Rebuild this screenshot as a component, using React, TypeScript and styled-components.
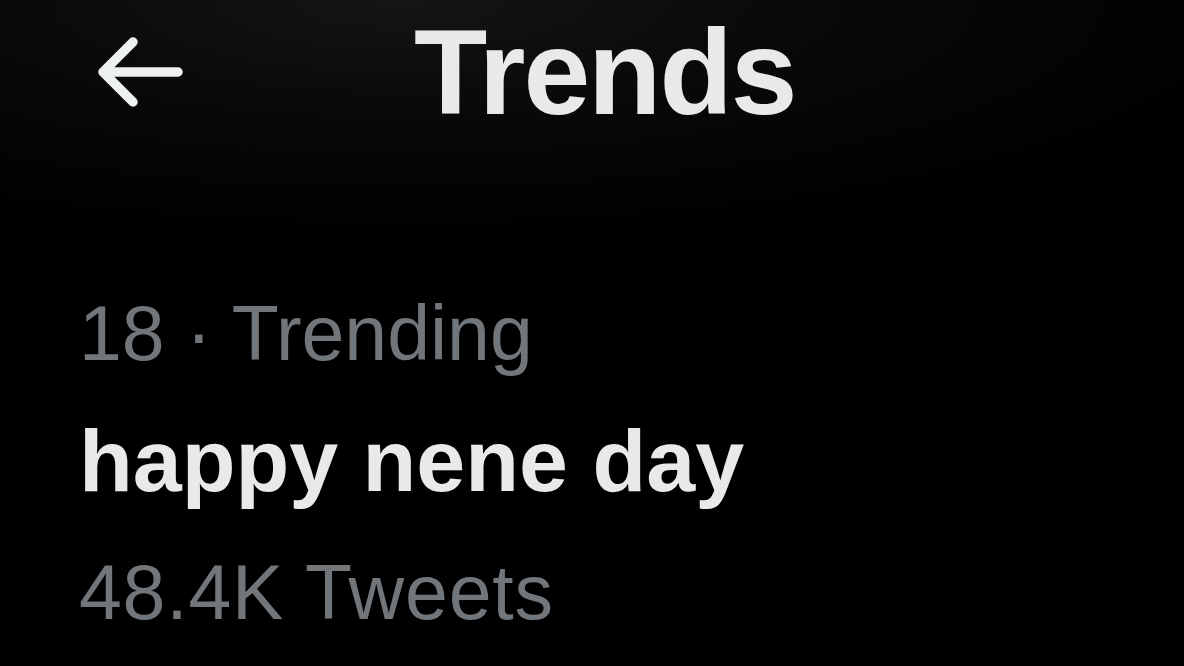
import styled, { createGlobalStyle } from "styled-components";

const GlobalStyle = createGlobalStyle`
    html, body {
        margin: 0;
        padding: 0;
        background: #000000;
    }
    body {
        font-family: "Liberation Sans", Arial, sans-serif;
    }
`

type TrendProps = {
    rank: number
    category: string
    title: string
    tweetCount: string
}

const trend: TrendProps = {
    rank: 18,
    category: 'Trending',
    title: 'happy nene day',
    tweetCount: '48.4K Tweets',
}

const BackArrow = () => (
    <BackButton aria-label="Back">
        <svg width="95" height="76" viewBox="0 0 95 76" fill="none">
            <path
                d="M40 8 L10 38 L40 68 M10 38 H85"
                stroke="#eef1f2"
                strokeWidth="9.5"
                strokeLinecap="round"
                strokeLinejoin="round"
            />
        </svg>
    </BackButton>
)

export default function App() {
    return (
        <>
            <GlobalStyle />
            <Screen>
                <Header>
                    <BackArrow />
                    <HeaderTitle>Trends</HeaderTitle>
                </Header>
                <TrendItem>
                    <TrendMeta>{trend.rank} · {trend.category}</TrendMeta>
                    <TrendTitle>{trend.title}</TrendTitle>
                    <TrendCount>{trend.tweetCount}</TrendCount>
                </TrendItem>
            </Screen>
        </>
    )
}

const Screen = styled.div`
    width: 1184px;
    height: 666px;
    overflow: hidden;
    background: radial-gradient(ellipse 900px 240px at 400px 0px, #151515 0%, #090909 45%, #000000 100%);
    display: flex;
    flex-direction: column;
`

const Header = styled.header`
    display: flex;
    align-items: center;
    height: 130px;
    margin-top: 7px;
    padding-left: 93px;
    gap: 226px;
`

const BackButton = styled.button`
    display: flex;
    padding: 0;
    border: none;
    background: transparent;
    cursor: pointer;
`

const HeaderTitle = styled.h1`
    margin: 0;
    font-size: 120px;
    line-height: 130px;
    font-weight: 700;
    letter-spacing: -2px;
    color: #e7e9ea;
`

const TrendItem = styled.section`
    display: flex;
    flex-direction: column;
    padding-left: 79px;
    margin-top: 151px;
`

const TrendMeta = styled.div`
    font-size: 77px;
    line-height: 90px;
    color: #71767b;
`

const TrendTitle = styled.div`
    margin-top: 33px;
    font-size: 88px;
    line-height: 100px;
    font-weight: 700;
    color: #e7e9ea;
`

const TrendCount = styled.div`
    margin-top: 36px;
    font-size: 77px;
    line-height: 90px;
    letter-spacing: 0.8px;
    color: #71767b;
`
